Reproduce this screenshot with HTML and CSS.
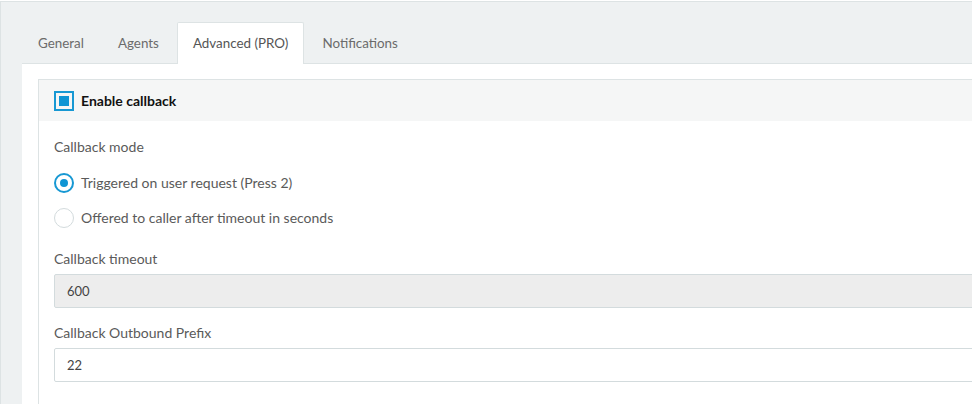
FILE: index.html
```html
<!DOCTYPE html>
<html lang="en">
<head>
  <meta charset="UTF-8">
  <title>Queue - Advanced</title>
  <link rel="stylesheet" href="styles.css">
</head>
<body>
  <div class="page">
    <ul class="tabs">
      <li class="tab">General</li>
      <li class="tab">Agents</li>
      <li class="tab active">Advanced (PRO)</li>
      <li class="tab">Notifications</li>
    </ul>

    <div class="tab-content">
      <div class="panel">
        <div class="panel-heading">
          <span class="checkbox checked"></span>
          <span class="panel-title">Enable callback</span>
        </div>
        <div class="panel-body">
          <label class="field-label">Callback mode</label>
          <div class="radio-row">
            <span class="radio checked"></span>
            <span class="radio-label">Triggered on user request (Press 2)</span>
          </div>
          <div class="radio-row">
            <span class="radio"></span>
            <span class="radio-label">Offered to caller after timeout in seconds</span>
          </div>

          <label class="field-label spaced">Callback timeout</label>
          <input type="text" class="form-control" value="600" disabled>

          <label class="field-label spaced">Callback Outbound Prefix</label>
          <input type="text" class="form-control" value="22">
        </div>
      </div>
    </div>
  </div>
</body>
</html>
```

FILE: styles.css
```css
body {
  margin: 0;
  background-color: #fff;
  font-family: Lato, "Liberation Sans", sans-serif;
  overflow: hidden;
}
.page {
  width: 1200px;
  height: 402px;
  margin-top: 1px;
  background-color: #eef1f2;
  border-top: 1px solid #dde3e4;
  border-left: 1px solid #dde3e4;
}
.tabs {
  list-style: none;
  margin: 0;
  padding: 20px 0 0 21px;
  display: flex;
}
.tab {
  box-sizing: border-box;
  height: 42px;
  margin-right: 2px;
  margin-bottom: -1px;
  padding: 0 15px;
  line-height: 41px;
  font-size: 13.4px;
  color: #6b6b6b;
  border: 1px solid transparent;
  border-bottom: none;
}
.tab.active {
  position: relative;
  background-color: #fff;
  color: #555;
  border-color: #dde3e4;
  border-radius: 2px 2px 0 0;
}
.tab-content {
  margin-left: 21px;
  height: 400px;
  background-color: #fff;
  border-top: 1px solid #dde3e4;
  padding: 15px 0 0 16px;
}
.panel {
  border: 1px solid #dde3e4;
  border-right: none;
  height: 400px;
}
.panel-heading {
  display: flex;
  align-items: center;
  height: 41px;
  padding: 0 15px;
  background-color: #f5f6f6;
}
.checkbox {
  box-sizing: border-box;
  width: 20px;
  height: 20px;
  border: 2px solid #1798d3;
  display: flex;
  align-items: center;
  justify-content: center;
}
.checkbox.checked::after {
  content: "";
  width: 10px;
  height: 10px;
  background-color: #0f95d4;
}
.panel-title {
  margin-left: 7px;
  font-size: 14px;
  font-weight: bold;
  color: #111;
}
.panel-body {
  padding: 16px 15px 0 15px;
}
.field-label {
  display: block;
  font-size: 14px;
  line-height: 20px;
  color: #5a5a5a;
  margin-bottom: 8px;
}
.field-label.spaced {
  margin-top: 14px;
  margin-bottom: 5px;
}
.field-label.spaced + .form-control + .field-label.spaced {
  margin-top: 15px;
}
.radio-row {
  display: flex;
  align-items: center;
  height: 35px;
}
.radio {
  box-sizing: border-box;
  width: 20px;
  height: 20px;
  border-radius: 50%;
  border: 1px solid #d3dbdd;
  display: flex;
  align-items: center;
  justify-content: center;
}
.radio.checked {
  border: 2px solid #1798d3;
}
.radio.checked::after {
  content: "";
  width: 8px;
  height: 8px;
  border-radius: 50%;
  background-color: #0f95d4;
}
.radio-label {
  margin-left: 7px;
  font-size: 14px;
  color: #5a5a5a;
}
.form-control {
  display: block;
  box-sizing: border-box;
  width: 1100px;
  height: 34px;
  padding: 0 12px;
  border: 1px solid #d3dbdd;
  border-radius: 2px;
  background-color: #fff;
  font-family: inherit;
  font-size: 13px;
  color: #444;
}
.form-control:disabled {
  background-color: #ededed;
  color: #444;
}
```
